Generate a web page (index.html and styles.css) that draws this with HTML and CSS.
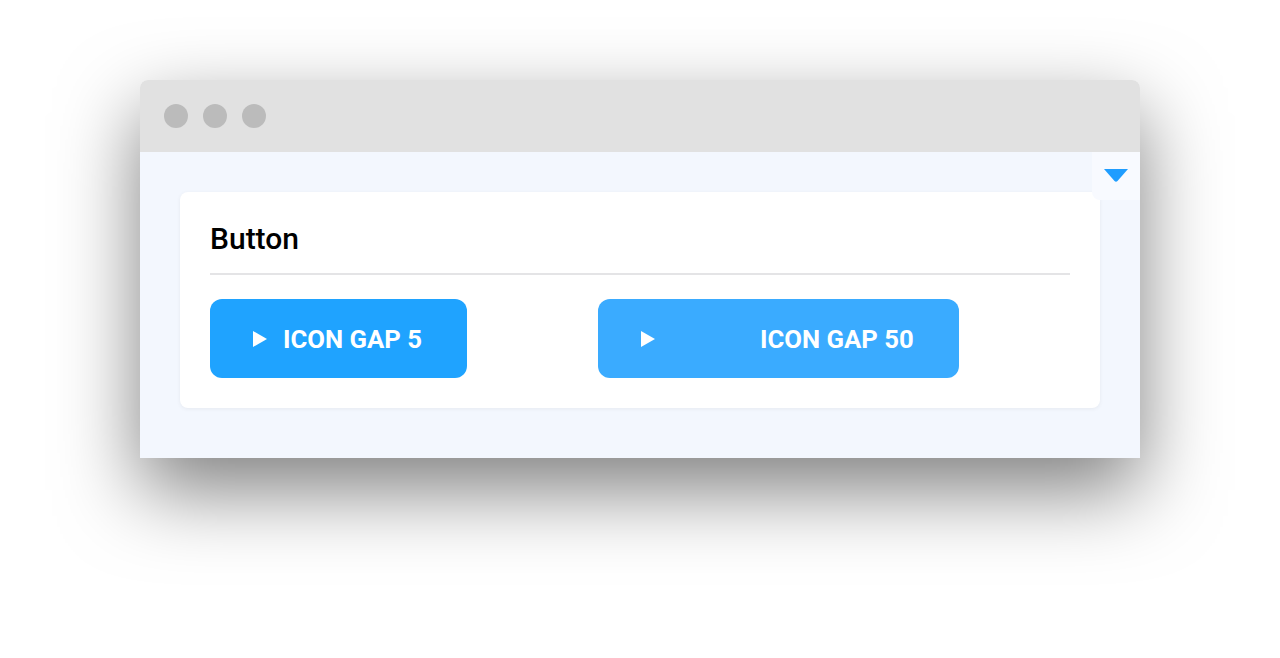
FILE: index.html
```html
<!DOCTYPE html>
<html lang="en">
<head>
    <meta charset="UTF-8">
    <meta name="viewport" content="width=device-width, initial-scale=1.0">
    <title>Button - Icon Gap</title>
    <link rel="stylesheet" href="styles.css">
</head>
<body>
    <div class="window">
        <div class="titlebar">
            <span class="dot"></span>
            <span class="dot"></span>
            <span class="dot"></span>
        </div>
        <div class="viewport">
            <div class="toggle">
                <svg width="26" height="14" viewBox="0 0 26 14"><path d="M1 1 L25 1 L14.5 13 Q13 14.5 11.5 13 Z" fill="#1f9dff"/></svg>
            </div>
            <div class="card">
                <h2 class="card-title">Button</h2>
                <div class="btn-row">
                    <a class="btn" href="#">
                        <svg class="icon" width="14" height="16" viewBox="0 0 14 16"><path d="M0 0 L14 8 L0 16 Z" fill="#fff"/></svg>
                        <span class="gap-5">ICON GAP 5</span>
                    </a>
                    <a class="btn light" href="#">
                        <svg class="icon" width="14" height="16" viewBox="0 0 14 16"><path d="M0 0 L14 8 L0 16 Z" fill="#fff"/></svg>
                        <span class="gap-50">ICON GAP 50</span>
                    </a>
                </div>
            </div>
        </div>
    </div>
</body>
</html>
```

FILE: styles.css
```css
body {
    margin: 0;
    background: #fff;
    font-family: Roboto, 'Liberation Sans', sans-serif;
    padding: 80px 140px;
    min-height: 100vh;
    box-sizing: border-box;
}
.window {
    width: 1000px;
    border-radius: 8px 8px 0 0;
    box-shadow: 0 32px 80px rgba(0,0,0,0.5);
    overflow: hidden;
}
.titlebar {
    height: 72px;
    background: #e1e1e1;
    display: flex;
    align-items: center;
    gap: 15px;
    padding-left: 24px;
}
.dot {
    width: 24px;
    height: 24px;
    border-radius: 50%;
    background: #bbbbbb;
}
.viewport {
    background: #f3f7fe;
    padding: 40px 40px 50px;
    position: relative;
}
.toggle {
    position: absolute;
    top: 0;
    right: 0;
    width: 48px;
    height: 48px;
    background: #f8faff;
    border-bottom-left-radius: 8px;
    display: flex;
    align-items: center;
    justify-content: center;
    padding-bottom: 3px;
    box-sizing: border-box;
}
.card {
    background: #fff;
    border-radius: 8px;
    box-shadow: 0 1px 4px rgba(0,0,0,0.06);
    padding: 28px 30px 30px;
}
.card-title {
    margin: 0;
    font-size: 30px;
    font-weight: 500;
    color: #000;
    line-height: 38px;
    padding-bottom: 15px;
    border-bottom: 2px solid #e4e4e6;
}
.btn-row {
    display: flex;
    gap: 131px;
    margin-top: 24px;
}
.btn {
    display: flex;
    align-items: center;
    height: 79px;
    padding: 0 45px 0 43px;
    background: #1fa3ff;
    color: #fff;
    border-radius: 12px;
    text-decoration: none;
    font-size: 25.7px;
    font-weight: 700;
}
.btn.light {
    background: #3aabff;
}
.icon {
    flex: none;
}
.gap-5 {
    margin-left: 16px;
}
.gap-50 {
    margin-left: 105px;
}
```
